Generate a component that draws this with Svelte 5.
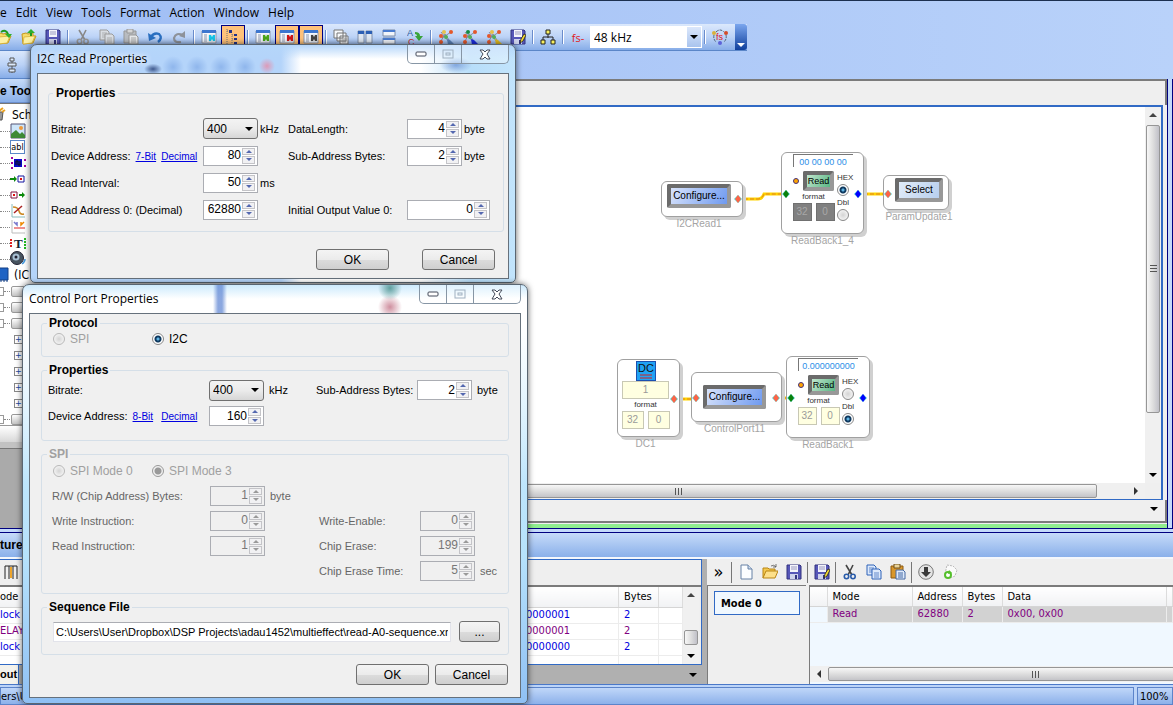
<script lang="ts">
  type Tool = { icon: string; sep?: boolean; on?: boolean; wide?: boolean };

  const menus = ['e', 'Edit', 'View', 'Tools', 'Format', 'Action', 'Window', 'Help'];

  const mainTools: Tool[] = [
    { icon: 'open' },
    { icon: 'save', sep: true },
    { icon: 'cut' },
    { icon: 'copy' },
    { icon: 'paste' },
    { icon: 'undo' },
    { icon: 'redo', sep: true },
    { icon: 'win-cyan' },
    { icon: 'tree', on: true, sep: true },
    { icon: 'win-green' },
    { icon: 'win-red', on: true },
    { icon: 'win-dark', on: true, sep: true },
    { icon: 'cascade' },
    { icon: 'tile-v' },
    { icon: 'tile-h' },
    { icon: 'spell', wide: true, sep: true },
    { icon: 'link-blue' },
    { icon: 'link-navy' },
    { icon: 'link-gold' },
    { icon: 'save-edit', sep: true },
    { icon: 'hierarchy', sep: true }
  ];

  const captureTools: Tool[] = [
    { icon: 'new' },
    { icon: 'folder' },
    { icon: 'save', sep: true },
    { icon: 'save-edit', sep: true },
    { icon: 'cut-blue' },
    { icon: 'copy-blue' },
    { icon: 'paste-gold', sep: true },
    { icon: 'download' },
    { icon: 'recycle' }
  ];

  const treeIcons = ['picture', 'abl', 'chip', 'in', 'out', 'curve', 'axis', 'text', 'speaker'];

  const captures = [
    { mode: 'lock', value: '0000001', bytes: '2', read: false },
    { mode: 'ELAY', value: '0000001', bytes: '2', read: true },
    { mode: 'lock', value: '0000000', bytes: '2', read: false }
  ];

  let hexSelected = $state('HEX');
  let dblSelected = $state('Dbl');
  let protocol = $state('I2C');
</script>

{#snippet icon(name: string)}
  <svg class="icon" width="16" height="16" viewBox="0 0 16 16" aria-hidden="true">
    {#if name === 'open'}
      <path d="M1 5l4-1 2 1 5-1v3l3 0-3 7-10 1z" fill="#f6dc6a" stroke="#c79a1c" />
      <path d="M3 8l11-1-3 7-9 1z" fill="#fdf1a4" stroke="#d3aa2e" stroke-width=".7" />
      <path d="M10 7V3" stroke="#1f9a1f" stroke-width="2" /><path d="M6 4l4-4 4 4z" fill="#2fb02f" />
    {:else if name === 'import'}
      <path d="M1 5l4-1 2 1 5-1v3l3 0-3 7-10 1z" fill="#f6dc6a" stroke="#c79a1c" />
      <path d="M3 8l11-1-3 7-9 1z" fill="#fdf1a4" stroke="#d3aa2e" stroke-width=".7" />
      <path d="M5 3q5-3 7 2" fill="none" stroke="#1f9a1f" stroke-width="2" /><path d="M9 5h7l-3 4z" fill="#2fb02f" />
    {:else if name === 'folder'}
      <path d="M1 14V4h5l1 1h6v3" fill="#f3c84f" stroke="#b98514" />
      <path d="M1 14l3-7h12l-3 7z" fill="#fde08a" stroke="#b98514" />
      <path d="M9 2q3-2 5 1M14 0v3h-3" fill="none" stroke="#555" stroke-width=".8" />
    {:else if name === 'save' || name === 'save-edit'}
      <path d="M1 1h13l1 1v13H1z" fill="#5757b8" stroke="#33337e" />
      <path d="M4 1h8v7H4z" fill="#f4f4fb" />
      <path d="M5 3h6M5 5h6" stroke="#9a9ac0" />
      <path d="M4 10h8v5H4z" fill="#cfd3ec" /><path d="M9 11h2v4H9z" fill="#33337e" />
      {#if name === 'save-edit'}
        <path d="M10 14l1-4 3-5 2 1-3 6z" fill="#f5d935" stroke="#222" stroke-width=".8" />
      {/if}
    {:else if name === 'cut' || name === 'cut-blue'}
      {@const c = name === 'cut' ? '#9a9a9a' : '#2a5caa'}
      <path d="M4 1l6 10M11 1L6 11" stroke={name === 'cut' ? '#888' : '#444'} stroke-width="1.6" />
      <circle cx="4.500" cy="12.500" r="2.200" fill="none" stroke={c} stroke-width="1.600" />
      <circle cx="11" cy="12.500" r="2.200" fill="none" stroke={c} stroke-width="1.600" />
    {:else if name === 'copy' || name === 'copy-blue'}
      {@const c = name === 'copy' ? '#9b9b9b' : '#2f62b8'}
      {@const f = name === 'copy' ? '#d9dde2' : '#dce9fb'}
      <path d="M1 1h7l2 2v8H1z" fill={f} stroke={c} />
      <path d="M3 4h5M3 6h5M3 8h4" stroke={c} stroke-width=".7" />
      <path d="M6 5h7l2 2v8H6z" fill={f} stroke={c} />
      <path d="M8 9h5M8 11h5M8 13h5" stroke={c} stroke-width=".7" />
    {:else if name === 'paste' || name === 'paste-gold'}
      {@const g = name === 'paste'}
      <path d="M1 2h12v12H1z" fill={g ? '#b9bcc0' : '#d9972b'} stroke={g ? '#979797' : '#8d5a12'} />
      <path d="M4 0h6v4H4z" fill={g ? '#d5d5d5' : '#e9d49a'} stroke={g ? '#979797' : '#70501c'} />
      <path d="M6 6h7l2 2v7H6z" fill={g ? '#e6e8ea' : '#dde9fa'} stroke={g ? '#979797' : '#4469a3'} />
      <path d="M8 9h5M8 11h5M8 13h5" stroke={g ? '#a9a9a9' : '#4469a3'} />
    {:else if name === 'undo'}
      <path d="M4 8q3-5 8-3q4 4-1 8" fill="none" stroke="#2a6fc0" stroke-width="2.400" />
      <path d="M1 4l1 8 7-3z" fill="#2a6fc0" />
    {:else if name === 'redo'}
      <path d="M12 6q-7-3-9 3q0 5 7 4" fill="none" stroke="#8e9299" stroke-width="2.200" />
      <path d="M14 2v7l-6-2z" fill="#8e9299" />
    {:else if name.startsWith('win-')}
      {@const c = name === 'win-cyan' ? '#17c3e6' : name === 'win-green' ? '#4aa51a' : name === 'win-red' ? '#d01414' : '#444'}
      <path d="M1 2h14v12H1z" fill="#f6f8fc" stroke="#8e99ad" />
      <path d="M1 1h14v3H1z" fill="#3c76cf" />
      <path d="M3 6h3M3 8h3M3 10h3M3 12h3" stroke="#8c98b0" />
      <path d="M8 6h6v6H8z" fill="#fff" stroke="#b9c1d0" stroke-width=".6" />
      <path d="M8 6h2l1 2 1-2h2v6h-2l-1-2-1 2H8z" fill={c} />
    {:else if name === 'tree'}
      <path d="M2 0v16M2 2h3M7 5v9M7 6h3M7 10h3" stroke="#777" stroke-dasharray="1 1" />
      <path d="M4 1h3v3H4zM9 5h3v2H9zM9 9h3v2H9zM9 13h3v2H9z" fill="#223388" />
    {:else if name === 'cascade'}
      <path d="M1 1h9v8H1zM4 4h9v8H4zM7 7h8v8H7z" fill="#f7f9fb" stroke="#777" />
      <path d="M8 10h6M8 12h6M10 8v6M12 8v6" stroke="#8c8c8c" stroke-width=".6" />
    {:else if name === 'tile-v'}
      <path d="M1 2h6v12H1zM9 2h6v12H9z" fill="#dfe7f2" stroke="#8090aa" />
      <path d="M1 2h6v3H1zM9 2h6v3H9z" fill="#2c5fb4" />
    {:else if name === 'tile-h'}
      <path d="M2 1h12v6H2zM2 9h12v6H2z" fill="#f2f5fa" stroke="#7d8ca8" />
      <path d="M2 1h12v2H2zM2 9h12v2H2z" fill="#4a7cd0" />
    {:else if name === 'spell'}
      <text class="glyph" x="0" y="7" font-size="9" fill="#2f5d9d">A</text>
      <text class="glyph" x="1" y="16" font-size="9" fill="#c02b2b">C</text>
      <path d="M8 3q5 0 5 4h3l-4 5-4-5h2q0-2-2-2z" fill="#3aa53a" />
    {:else if name.startsWith('link-')}
      {@const c = name === 'link-blue' ? '#5b82b8' : name === 'link-navy' ? '#1c2ce0' : '#e4bc1f'}
      <path d="M3 12l4-7 4 6M4 9l9-6M3 3l8 10" stroke="#778" stroke-width=".8" fill="none" />
      <circle cx="6" cy="3" r="2" fill={name === 'link-navy' ? '#138b43' : '#e7c04a'} />
      <circle cx="13" cy="3" r="2" fill="#e4572a" /><circle cx="3" cy="7" r="2" fill="#e4572a" />
      <circle cx="3" cy="13" r="2" fill="#e4572a" /><circle cx="8" cy="8" r="2" fill="#54b05a" />
      <path d="M9 10l3 1 4 4-6 1z" fill={c} />
    {:else if name === 'hierarchy'}
      <path d="M8 5v4M3 11V8h10v3" fill="none" stroke="#222" />
      <path d="M6 1h4v4H6zM1 11h4v4H1zM11 11h4v4h-4z" fill="#f8ef5c" stroke="#222" />
    {:else if name === 'new'}
      <path d="M3 1h7l4 4v10H3z" fill="#fbfdff" stroke="#6681a5" />
      <path d="M10 1v4h4" fill="#cddcf0" stroke="#6681a5" />
    {:else if name === 'download'}
      <circle cx="8" cy="8" r="7.300" fill="#e4e4e4" stroke="#777" />
      <path d="M6 3h4v5h3l-5 5-5-5h3z" fill="#3a3a3a" />
    {:else if name === 'recycle'}
      <path d="M5 1l6 1 4 4-2 6-5 2-5-4z" fill="#fafafa" stroke="#bbb" stroke-dasharray="2 1" />
      <circle cx="6" cy="11" r="3" fill="#fff" stroke="#55bf2c" stroke-width="2" />
      <path d="M7 6l3 3-4 1z" fill="#55bf2c" />
    {:else if name === 'rate'}
      <path d="M4 3q4-4 8 0M14 6q1 4-2 7M2 6q-1 4 2 7" fill="none" stroke="#567" stroke-dasharray="3 1" />
      <circle cx="2" cy="4" r="2" fill="#d9b13b" /><circle cx="14" cy="4" r="2" fill="#d24c2a" />
      <circle cx="8" cy="14" r="2" fill="#5d62d8" />
      <text class="glyph" x="4" y="11" font-size="9" fill="#e01818">fs</text>
    {:else if name === 'align'}
      <path d="M8 1v15" stroke="#555" />
      <path d="M6 1h4v3H6zM4 6h8v3H4zM5 12h6v3H5z" fill="#dce9fb" stroke="#555" />
    {:else if name === 'picture'}
      <path d="M1 1h14v14H1z" fill="#cfe6fa" stroke="#557" />
      <path d="M1 15V11l5-4 4 4 2-2 3 3v3z" fill="#3d8a35" /><circle cx="11" cy="5" r="2" fill="#ef9a3a" />
    {:else if name === 'chip'}
      <path d="M4 4h8v8H4z" fill="#0808c8" /><path d="M6 10V6h2v4h2V6" stroke="#111" fill="none" />
      <path d="M1 2h2v2H1zM1 7h2v2H1zM1 12h2v2H1zM14 4h2v2h-2zM14 10h2v2h-2z" fill="#a000a0" />
    {:else if name === 'in'}
      <path d="M0 8h4" stroke="#0a8a0a" stroke-width="2" /><path d="M4 5l3 3-3 3z" fill="#0a8a0a" />
      <path d="M8 5h6v6H8z" fill="#fff" stroke="#1515a0" /><path d="M10 7h2v2h-2z" fill="#e01010" />
    {:else if name === 'out'}
      <path d="M1 5h6v6H1z" fill="#fff" stroke="#801540" /><path d="M3 7h2v2H3z" fill="#e01010" />
      <path d="M9 8h4" stroke="#0a8a0a" stroke-width="2" /><path d="M12 5l3 3-3 3z" fill="#0a8a0a" />
    {:else if name === 'curve'}
      <path d="M2 1v13h13" fill="none" stroke="#8bb" /><path d="M3 4q5 0 6 4t5 3" fill="none" stroke="#c82" stroke-width="1.500" />
      <path d="M4 10l8-7" stroke="#a22" stroke-width="1.500" />
    {:else if name === 'axis'}
      <path d="M2 1v13h13" fill="none" stroke="#bbb" /><path d="M4 9h11" stroke="#d22" />
      <path d="M4 3l3 3V3" fill="none" stroke="#77c" stroke-width="1.500" />
      <path d="M14 3l-3 3V3" fill="none" stroke="#e80" stroke-width="1.500" />
    {:else if name === 'text'}
      <text class="serif" x="4" y="13" font-size="13" fill="#123">T</text>
      <path d="M1 4v9" stroke="#d22" stroke-width="2" stroke-dasharray="2 1" />
      <path d="M15 3v11" stroke="#2b2" stroke-width="2" stroke-dasharray="2 1" />
    {:else if name === 'speaker'}
      <circle cx="7" cy="7" r="6.500" fill="#47535f" stroke="#223" /><circle cx="6" cy="6" r="3.500" fill="#a8c0d4" />
      <circle cx="6" cy="6" r="1.500" fill="#223" /><path d="M12 13q3-2 3-5" fill="none" stroke="#49d" stroke-width="1.500" />
    {:else if name === 'wrench'}
      <path d="M3 5h6l-1 8H4z" fill="#999" stroke="#555" /><path d="M5 4l4-3M8 5l3-2" stroke="#e8a020" stroke-width="2" />
    {:else if name === 'ic'}
      <path d="M1 1h9v12H1z" fill="#1f63c4" stroke="#123f85" /><path d="M3 13v2M6 13v2M9 13v2" stroke="#123f85" />
    {/if}
  </svg>
{/snippet}

{#snippet toolbar(tools: Tool[])}
  {#each tools as tool}
    <button class="tool" class:on={tool.on} class:wide={tool.wide} type="button" aria-label={tool.icon}>
      {@render icon(tool.icon)}
    </button>
    {#if tool.sep}<span class="sep"></span>{/if}
  {/each}
{/snippet}

{#snippet spin(id: string, value: number, disabled = false, long = false)}
  <span class="spin" class:long class:disabled>
    <input {id} type="number" {value} {disabled} />
    <span class="arrows"><i class="step"></i><i class="step less"></i></span>
  </span>
{/snippet}

{#snippet windowButtons()}
  <div class="window-buttons">
    <button type="button" aria-label="Minimize">
      <svg width="12" height="6"><rect x="1" y="1" width="10" height="4" rx="1" fill="#fff" stroke="#444b5a" /></svg>
    </button>
    <button type="button" aria-label="Maximize" disabled>
      <svg width="12" height="10"><rect x="1" y="1" width="10" height="8" fill="none" stroke="#9fb0c0" /><rect x="4" y="4" width="4" height="2" fill="none" stroke="#9fb0c0" /></svg>
    </button>
    <button class="close" type="button" aria-label="Close">
      <svg width="12" height="11" viewBox="0 0 12 11"><path d="M1 1h3l2 2 2-2h3L8 5l3 5H8L6 8l-2 2H1l3-5z" fill="#fff" stroke="#444b5a" /></svg>
    </button>
  </div>
{/snippet}

{#snippet pin(x: number, y: number, color: string)}
  <path d="M{x - 4} {y}l4-4 4 4-4 4z" fill="#4fd8d0" />
  <path d="M{x - 3} {y}l3-4 3 4-3 4z" fill={color} />
{/snippet}

{#snippet readback(id: string, text: string, selected: string)}
  <output class="display">{text}</output>
  <div class="readback">
    <div class="read-left">
      <div class="read-row"><i class="dot"></i><button class="bevel green" type="button">Read</button></div>
      <span class="tiny">format</span>
      <div class="boxes" class:grey={selected === 'HEX'}><span>32</span><span>0</span></div>
    </div>
    <div class="read-right">
      {#each ['HEX', 'Dbl'] as option}
        <label for="{id}-{option}">{option}</label>
        <input id="{id}-{option}" name={id} type="radio" value={option} checked={selected === option} />
      {/each}
    </div>
  </div>
{/snippet}

<div class="app">
  <nav class="menu">
    {#each menus as item}
      <button type="button">{item}</button>
    {/each}
  </nav>

  <div class="toolbar">
    <button class="tool cut-off" type="button" aria-label="import">{@render icon('import')}</button>
    {@render toolbar(mainTools)}
    <label class="fs" for="rate">fs-</label>
    <span class="rate">
      <select id="rate"><option>48 kHz</option></select>
      <span class="rate-arrow"><i class="tri"></i></span>
    </span>
    <span class="sep"></span>
    <button class="tool" type="button" aria-label="rate">{@render icon('rate')}</button>
    <span class="overflow"><i class="tri"></i></span>
  </div>
  <div class="toolbar-row"><div class="toolbar second"><button class="tool" type="button" aria-label="align">{@render icon('align')}</button></div></div>

  <main class="work">
    <aside class="toolbox">
      <h2 class="caption">e Too</h2>
      <ul class="tree">
        <li class="root">{@render icon('wrench')}Sch</li>
        {#each treeIcons as name}
          <li>
            <span class="dots"></span>
            {#if name === 'abl'}<span class="abl">abl</span>{:else}{@render icon(name)}{/if}
          </li>
        {/each}
        <li class="root ic">{@render icon('ic')}(IC</li>
        {#each Array(3) as _}
          <li><span class="minus"></span><span class="dots short"></span><span class="node-folder"></span></li>
        {/each}
        {#each Array(5) as _}
          <li class="deep"><span class="plus">+</span></li>
        {/each}
        <li><span class="minus"></span><span class="dots short"></span><span class="node-folder"></span></li>
      </ul>
      <div class="hbar"></div>
      <div class="void"></div>
    </aside>

    <section class="document">
      <div class="tabs"></div>
      <div class="view">
        <div class="canvas">
          <svg class="wires" width="920" height="375">
            <path d="M516 92h20q4 0 6-5h23M636 87h30" />
            <path d="M453 292h22M554 291h16" />
            <path class="dash" d="M516 92h20q4 0 6-5h23M636 87h30" />
            <path class="dash" d="M453 292h22M554 291h16" />
          </svg>

          <div class="node i2c-read"><button class="bevel blue" type="button">Configure...</button><span class="name">I2CRead1</span></div>
          <div class="node read-back-4">{@render readback('rb4', '00 00 00 00', hexSelected)}<span class="name">ReadBack1_4</span></div>
          <div class="node param"><button class="bevel pale" type="button">Select</button><span class="name">ParamUpdate1</span></div>
          <div class="node dc">
            <svg width="20" height="20" aria-hidden="true">
              <rect x="0" y="0" width="20" height="20" fill="#1fa2f4" stroke="#1b50b0" stroke-width="2" />
              <text class="glyph" x="2" y="11" font-size="11" fill="#111">DC</text>
              <path d="M4 14h12M4 17h12" stroke="#d22020" />
            </svg>
            <span class="value">1</span>
            <span class="tiny">format</span>
            <div class="boxes"><span>32</span><span>0</span></div>
            <span class="name">DC1</span>
          </div>
          <div class="node control"><button class="bevel blue" type="button">Configure...</button><span class="name">ControlPort11</span></div>
          <div class="node read-back">{@render readback('rb1', '0.000000000', dblSelected)}<span class="name">ReadBack1</span></div>

          <svg class="pins" width="920" height="375">
            {@render pin(516, 92, '#ff6347')}
            {@render pin(564, 87, '#0a800a')}
            {@render pin(636, 87, '#0000ff')}
            {@render pin(666, 87, '#ff6347')}
            {@render pin(452, 292, '#ff6347')}
            {@render pin(474, 291, '#ff6347')}
            {@render pin(554, 291, '#ff6347')}
            {@render pin(569, 291, '#0a800a')}
            {@render pin(641, 291, '#0000ff')}
          </svg>
        </div>
        <div class="vscroll"><i class="up"></i><div class="thumb"><i class="grip"></i></div><i class="down"></i></div>
        <div class="hscroll"><div class="thumb"><i class="grip"></i></div><i class="right"></i></div>
      </div>
      <div class="doc-foot"><i class="tri"></i></div>
      <div class="green-line"></div>
    </section>
    <div class="v-splitter"></div>
  </main>

  <div class="splitter"></div>
  <h2 class="caption capture-title">ture</h2>

  <section class="bottom">
    <div class="captures">
      <div class="capture-frame">
        <div class="capture-tools">
          <svg width="18" height="14" aria-hidden="true"><path d="M1 14V1h4v13M5 1h8v13M9 1v13" fill="none" stroke="#222" /><path d="M6 2h2v11H6z" fill="#eda52c" /></svg>
        </div>
        <div class="capture-body">
          <table>
            <colgroup><col /><col class="c-value" /><col class="c-bytes" /><col class="c-rest" /></colgroup>
            <thead><tr><th>ode</th><th></th><th>Bytes</th><th></th></tr></thead>
            <tbody>
              {#each captures as row}
                <tr class:read={row.read}><td>{row.mode}</td><td>{row.value}</td><td>{row.bytes}</td><td></td></tr>
              {/each}
              <tr><td></td><td></td><td></td><td></td></tr>
            </tbody>
          </table>
          <div class="vscroll small"><i class="up"></i><div class="thumb"></div><i class="down"></i></div>
        </div>
      </div>
      <div class="capture-tabs"><span class="tab">out</span><i class="tri"></i></div>
    </div>

    <div class="sequence">
      <div class="sequence-tools">
        <span class="more">»</span><span class="sep"></span>
        {@render toolbar(captureTools)}
      </div>
      <div class="sequence-body">
        <div class="modes"><button class="mode" type="button">Mode 0</button></div>
        <div class="reads">
          <table>
            <colgroup><col class="r-mark" /><col class="r-mode" /><col class="r-address" /><col class="r-bytes" /><col /><col class="r-end" /></colgroup>
            <thead><tr><th></th><th>Mode</th><th>Address</th><th>Bytes</th><th>Data</th><th></th></tr></thead>
            <tbody><tr><td></td><td>Read</td><td>62880</td><td>2</td><td>0x00, 0x00</td><td></td></tr></tbody>
          </table>
          <div class="hscroll"><i class="left"></i><div class="thumb"><i class="grip"></i></div></div>
        </div>
      </div>
    </div>
  </section>

  <footer class="status"><span class="path">ers\U</span><span class="zoom">100%</span></footer>

  <section class="dialog read-dialog">
    <header><h3>I2C Read Properties</h3>{@render windowButtons()}</header>
    <form class="client">
      <fieldset>
        <legend>Properties</legend>
        <div class="form-grid">
          <label for="rd-bitrate">Bitrate:</label>
          <span class="field"><span class="combo"><select id="rd-bitrate"><option>400</option></select><i class="tri"></i></span>kHz</span>
          <label for="rd-length">DataLength:</label>
          <span class="field">{@render spin('rd-length', 4)}byte</span>

          <span><label for="rd-device">Device Address:</label> <a href="#bits">7-Bit</a> <a href="#base">Decimal</a></span>
          <span class="field">{@render spin('rd-device', 80)}</span>
          <label for="rd-sub">Sub-Address Bytes:</label>
          <span class="field">{@render spin('rd-sub', 2)}byte</span>

          <label for="rd-interval">Read Interval:</label>
          <span class="field">{@render spin('rd-interval', 50)}ms</span>
          <span></span><span></span>

          <label for="rd-address">Read Address 0: (Decimal)</label>
          <span class="field">{@render spin('rd-address', 62880)}</span>
          <label for="rd-initial">Initial Output Value 0:</label>
          <span class="field">{@render spin('rd-initial', 0, false, true)}</span>
        </div>
      </fieldset>
      <div class="actions"><button type="button">OK</button><button type="button">Cancel</button></div>
    </form>
  </section>

  <section class="dialog port-dialog">
    <header><h3>Control Port Properties</h3>{@render windowButtons()}</header>
    <form class="client">
      <fieldset class="protocol">
        <legend>Protocol</legend>
        <div class="radios">
          <label class="off"><input type="radio" name="protocol" value="SPI" bind:group={protocol} disabled />SPI</label>
          <label><input type="radio" name="protocol" value="I2C" bind:group={protocol} />I2C</label>
        </div>
      </fieldset>
      <fieldset class="port">
        <legend>Properties</legend>
        <div class="form-grid">
          <label for="cp-bitrate">Bitrate:</label>
          <span class="field"><span class="combo"><select id="cp-bitrate"><option>400</option></select><i class="tri"></i></span>kHz</span>
          <label for="cp-sub">Sub-Address Bytes:</label>
          <span class="field">{@render spin('cp-sub', 2)}byte</span>

          <span><label for="cp-device">Device Address:</label> <a href="#port-bits">8-Bit</a>&nbsp; <a href="#port-base">Decimal</a></span>
          <span class="field">{@render spin('cp-device', 160)}</span>
        </div>
      </fieldset>
      <fieldset class="spi">
        <legend>SPI</legend>
        <div class="radios">
          <label class="off"><input type="radio" name="spi-mode" disabled />SPI Mode 0</label>
          <label class="off"><input type="radio" name="spi-mode" checked disabled />SPI Mode 3</label>
        </div>
        <div class="form-grid">
          <label for="spi-rw">R/W (Chip Address) Bytes:</label>
          <span class="field">{@render spin('spi-rw', 1, true)}byte</span>
          <span></span><span></span>

          <label for="spi-write">Write Instruction:</label>
          <span class="field">{@render spin('spi-write', 0, true)}</span>
          <label for="spi-enable">Write-Enable:</label>
          <span class="field">{@render spin('spi-enable', 0, true)}</span>

          <label for="spi-read">Read Instruction:</label>
          <span class="field">{@render spin('spi-read', 1, true)}</span>
          <label for="spi-erase">Chip Erase:</label>
          <span class="field">{@render spin('spi-erase', 199, true)}</span>

          <span></span><span></span>
          <label for="spi-time">Chip Erase Time:</label>
          <span class="field">{@render spin('spi-time', 5, true)}sec</span>
        </div>
      </fieldset>
      <fieldset class="file">
        <legend>Sequence File</legend>
        <div class="file-row">
          <input type="text" aria-label="Sequence File" value="C:\Users\User\Dropbox\DSP Projects\adau1452\multieffect\read-A0-sequence.xml" />
          <button type="button">...</button>
        </div>
      </fieldset>
      <div class="actions"><button type="button">OK</button><button type="button">Cancel</button></div>
    </form>
  </section>
</div>

<style>
  :global(body) {
    margin: 0;
  }

  .app,
  .app :global(*) {
    box-sizing: border-box;
  }

  .app {
    position: relative;
    display: flex;
    flex-direction: column;
    min-height: 100vh;
    overflow: hidden;
    background: linear-gradient(90deg, #9fbdf4, #b9d2fa);
    border-top: 1px solid #1c3050;
    font-family: 'DejaVu Sans Condensed', 'Noto Sans', sans-serif;
    font-size: 11px;
    color: #000;
  }

  button,
  input,
  select {
    font: inherit;
    color: inherit;
    padding: 0;
    margin: 0;
  }

  h2,
  h3,
  ul {
    margin: 0;
    padding: 0;
    list-style: none;
  }

  table {
    width: 100%;
    border-collapse: collapse;
    table-layout: fixed;
  }

  th,
  td {
    text-align: left;
    font-weight: normal;
    white-space: nowrap;
    overflow: hidden;
    padding: 0 5px;
  }

  .icon {
    display: block;
    flex: none;
  }

  .glyph {
    font-family: 'Liberation Sans', sans-serif;
  }

  .serif {
    font-family: 'Liberation Serif', serif;
    font-weight: bold;
  }

  .tri,
  .up,
  .down,
  .left,
  .right {
    flex: none;
    width: 0;
    height: 0;
    border: 4px solid transparent;
  }

  .tri,
  .down {
    border-top-color: #000;
    border-bottom: 0;
  }

  .up {
    border-bottom-color: #444;
    border-top: 0;
  }

  .left {
    border-right-color: #333;
    border-left: 0;
  }

  .right {
    border-left-color: #333;
    border-right: 0;
  }

  /* menu and toolbars */
  .menu {
    display: flex;
    height: 23px;
    gap: 9px;
  }

  .menu button {
    border: 0;
    background: none;
    font-family: 'Open Sans', 'Noto Sans', sans-serif;
    font-size: 12px;
    line-height: 24px;
  }

  .toolbar {
    display: flex;
    align-items: center;
    align-self: flex-start;
    height: 27px;
    background: linear-gradient(#dbe8fc, #bcd3f7 50%, #87ade8);
    border-bottom: 1px solid #5b86c8;
  }

  .toolbar-row {
    height: 28px;
  }

  .second {
    width: 460px;
    height: 28px;
  }

  .tool {
    display: flex;
    align-items: center;
    justify-content: center;
    width: 24px;
    height: 24px;
    border: 0;
    background: none;
  }

  .tool.on {
    background: #ffc27a;
    border: 1px solid #000080;
  }

  .tool.wide {
    width: 27px;
  }

  .tool.cut-off {
    width: 17px;
    justify-content: flex-end;
    padding-right: 5px;
    overflow: hidden;
  }

  .sep {
    flex: none;
    width: 2px;
    height: 14px;
    margin: 0 2px;
    background: linear-gradient(90deg, #6a8ccb 50%, #fff 50%);
  }

  .fs {
    width: 24px;
    text-align: center;
    color: #e02020;
    font-family: 'Open Sans', 'Noto Sans', sans-serif;
  }

  .rate {
    display: flex;
    width: 112px;
    height: 22px;
    padding: 1px;
    background: #fff;
  }

  .rate select {
    flex: 1;
    appearance: none;
    border: 0;
    padding-left: 3px;
    background: none;
    font-family: 'Open Sans', 'Noto Sans', sans-serif;
    font-size: 12px;
  }

  .rate-arrow {
    display: flex;
    align-items: center;
    justify-content: center;
    width: 14px;
    background: linear-gradient(#dbe7fb, #a9c4ee);
  }

  .overflow {
    display: flex;
    align-items: flex-end;
    justify-content: center;
    align-self: stretch;
    width: 12px;
    margin-left: 3px;
    padding-bottom: 3px;
    background: linear-gradient(#7ba6ee, #0f3f9c);
    border-radius: 0 3px 3px 0;
  }

  .overflow .tri {
    border-top-color: #fff;
  }

  /* main area */
  .work {
    flex: 1;
    display: flex;
    min-height: 449px;
  }

  .toolbox {
    display: flex;
    flex-direction: column;
    width: 220px;
    background: #fff;
  }

  .caption {
    height: 24px;
    background: linear-gradient(#c6dbf9, #8ab0ea);
    font-family: 'Liberation Sans', sans-serif;
    font-size: 12px;
    line-height: 24px;
    border-bottom: 1px solid #6b8fce;
  }

  .tree {
    height: 322px;
    padding-top: 3px;
    border-top: 1px solid #777;
    overflow: hidden;
  }

  .tree li {
    display: flex;
    align-items: center;
    height: 16px;
  }

  .tree .root {
    gap: 2px;
    margin-left: -8px;
    padding-left: 2px;
    font-size: 12px;
  }

  .tree .ic {
    padding-left: 6px;
    gap: 0;
  }

  .dots {
    width: 10px;
    border-top: 1px dotted #888;
  }

  .dots.short {
    width: 6px;
  }

  .minus {
    width: 4px;
    height: 9px;
    border: 1px solid #999;
    border-left: 0;
  }

  .abl {
    width: 15px;
    height: 14px;
    border: 1px solid #5a88c8;
    font-size: 9px;
    line-height: 12px;
    text-align: center;
  }

  .node-folder {
    width: 16px;
    height: 11px;
    margin-left: 1px;
    border: 1px solid #999;
    border-radius: 2px;
    background: linear-gradient(#fff, #c4c4c4);
  }

  .tree .deep {
    padding-left: 14px;
  }

  .plus {
    width: 9px;
    height: 9px;
    border: 1px solid #888;
    color: #224a9c;
    font-size: 9px;
    line-height: 7px;
    text-align: center;
  }

  .hbar {
    height: 23px;
    border-bottom: 6px solid #c2c2c2;
    background: linear-gradient(#fff, #d8d8d8);
    border-top: 1px solid #999;
  }

  .void {
    flex: 1;
    background: #aaa;
    border-top: 1px solid #777;
  }

  .document {
    flex: 1;
    display: flex;
    flex-direction: column;
    min-width: 0;
    padding-left: 2px;
    background: #efefef;
  }

  .tabs {
    height: 26px;
    border-top: 2px solid #7b7b7b;
    border-right: 2px solid #7b7b7b;
  }

  .view {
    flex: 1;
    display: grid;
    grid-template: 1fr 16px / 1fr 16px;
    border: 1px solid #316ac5;
    border-left: 0;
    border-right-width: 2px;
    border-top-width: 2px;
    margin-right: 4px;
  }

  .canvas {
    position: relative;
    background: #fff;
    overflow: hidden;
    font-family: 'Liberation Sans', sans-serif;
  }

  .vscroll {
    display: flex;
    flex-direction: column;
    align-items: center;
    justify-content: space-between;
    padding: 6px 1px;
    background: #f0f0f0;
  }

  .vscroll .thumb {
    display: flex;
    align-items: center;
    justify-content: center;
    width: 14px;
    height: 79%;
    margin-bottom: auto;
    margin-top: 8px;
    border: 1px solid #969696;
    border-radius: 2px;
    background: linear-gradient(90deg, #f7f7f7, #dedede 50%, #c0c0c8);
  }

  .vscroll .grip {
    width: 7px;
    height: 8px;
    background: repeating-linear-gradient(#555 0 1px, transparent 1px 3px);
  }

  .hscroll {
    display: flex;
    align-items: center;
    padding: 1px 0;
    background: #f0f0f0;
  }

  .hscroll .thumb {
    display: flex;
    flex: 1;
    align-items: center;
    justify-content: center;
    height: 14px;
    border: 1px solid #969696;
    border-radius: 2px;
    background: linear-gradient(#f7f7f7, #dedede 50%, #c4c4c8);
  }

  .hscroll .grip {
    width: 8px;
    height: 7px;
    background: repeating-linear-gradient(90deg, #555 0 1px, transparent 1px 3px);
  }

  .view .hscroll {
    gap: 37px;
    padding-left: 39px;
    padding-right: 7px;
  }

  .doc-foot {
    display: flex;
    justify-content: flex-end;
    height: 23px;
    padding: 7px 7px 0 0;
    border-right: 2px solid #7b7b7b;
    border-bottom: 2px solid #7b7b7b;
  }

  .green-line {
    height: 5px;
    border-top: 1px solid #efefef;
    background: #90ee90;
  }

  .v-splitter {
    width: 6px;
    border: 1px solid #000080;
    border-width: 0 1px;
    background: #c4dafa;
  }

  .splitter {
    height: 5px;
    border: 1px solid #000080;
    border-width: 1px 0;
    background: #c4dafa;
  }

  /* schematic nodes */
  .wires,
  .pins {
    position: absolute;
    left: 0;
    top: 0;
    pointer-events: none;
  }

  .wires path {
    fill: none;
    stroke: #ffd400;
    stroke-width: 3;
  }

  .wires .dash {
    stroke: #e08020;
    stroke-width: 1;
    stroke-dasharray: 4 2;
  }

  .node {
    position: absolute;
    display: flex;
    flex-direction: column;
    align-items: center;
    border: 1px solid #a0a0a0;
    border-radius: 6px;
    background: #fff;
    box-shadow: 3px 3px 0 #d0d0d0;
    font-size: 10px;
  }

  .name {
    position: absolute;
    top: 100%;
    margin-top: 2px;
    color: #a4a4a4;
    white-space: nowrap;
  }

  .i2c-read {
    left: 439px;
    top: 74px;
    width: 82px;
    height: 36px;
    padding: 2px 6px 0 0;
  }

  .read-back-4 {
    left: 559px;
    top: 45px;
    width: 83px;
    height: 82px;
  }

  .param {
    left: 661px;
    top: 68px;
    width: 66px;
    height: 35px;
    padding: 2px 0 0 6px;
  }

  .dc {
    left: 395px;
    top: 252px;
    width: 63px;
    height: 78px;
    padding: 1px 6px 0 0;
  }

  .control {
    left: 469px;
    top: 265px;
    width: 91px;
    height: 50px;
    justify-content: center;
    padding-right: 4px;
  }

  .read-back {
    left: 564px;
    top: 249px;
    width: 84px;
    height: 82px;
  }

  .bevel {
    height: 24px;
    padding: 0 2px;
    border: 4px solid;
    border-color: #6b6b6b #989898 #989898 #6b6b6b;
    border-radius: 2px;
    font-size: 10px;
    line-height: 16px;
    white-space: nowrap;
  }

  .blue {
    background: linear-gradient(120deg, #d8e3fb, #6f9af0);
  }

  .pale {
    padding: 0 6px;
    background: linear-gradient(120deg, #e2ecf8, #b8cfee);
  }

  .green {
    height: 20px;
    padding: 0 1px;
    background: linear-gradient(120deg, #c0e6cd, #5ab685);
    font-size: 9px;
    line-height: 12px;
  }

  .display {
    width: 60px;
    height: 13px;
    margin-top: 1px;
    border: 1px solid #777;
    border-width: 1px 0 0 1px;
    color: #2d8fe8;
    font-size: 9px;
    line-height: 14px;
    text-align: center;
    white-space: nowrap;
  }

  .readback {
    display: flex;
    gap: 3px;
    align-self: stretch;
    padding: 4px 0 0 11px;
  }

  .read-left {
    display: flex;
    flex-direction: column;
    align-items: center;
    width: 41px;
  }

  .read-row {
    display: flex;
    align-items: center;
    gap: 4px;
  }

  .dot {
    width: 6px;
    height: 6px;
    border: 1px solid #46307a;
    border-radius: 50%;
    background: #ffa500;
  }

  .tiny {
    font-size: 8px;
    line-height: 12px;
    color: #333;
  }

  .boxes {
    display: flex;
    gap: 4px;
  }

  .boxes span,
  .value {
    width: 19px;
    height: 18px;
    border: 1px solid #c8c8b4;
    background: #ffffe1;
    color: #9a9a9a;
    line-height: 16px;
    text-align: center;
  }

  .boxes.grey span {
    border-color: #707070;
    background: #808080;
    color: #a8a8a8;
  }

  .dc .value {
    flex: none;
    width: 47px;
  }

  .dc .boxes span {
    width: 22px;
  }

  .read-right {
    display: flex;
    flex-direction: column;
    font-size: 8px;
    line-height: 13px;
    color: #333;
  }

  input[type='radio'] {
    appearance: none;
    flex: none;
    width: 12px;
    height: 12px;
    border: 1px solid #888;
    border-radius: 50%;
    background: radial-gradient(circle, #d4d4d4, #fff);
  }

  input[type='radio']:checked {
    background: radial-gradient(circle, #5fb4e4 0 1px, #103a60 2px 3px, #fff 4px);
  }

  input[type='radio']:disabled {
    border-color: #b8b8b8;
  }

  input[type='radio']:checked:disabled {
    border-color: #999;
    background: radial-gradient(circle, #999 0 3px, #f0f0f0 4px);
  }

  /* capture window */
  .capture-title {
    height: 26px;
    padding-bottom: 0;
    border-bottom: 2px solid #f4f7fc;
  }

  .bottom {
    display: flex;
    height: 125px;
    background: #b0b0b0;
  }

  .captures {
    display: flex;
    flex-direction: column;
    width: 60%;
    max-width: 702px;
  }

  .capture-frame {
    flex: 1;
    display: flex;
    flex-direction: column;
    min-height: 0;
    border: 1px solid #316ac5;
    border-left: 0;
    background: #efefef;
  }

  .capture-tools {
    flex: none;
    height: 27px;
    padding: 5px 4px;
    border-bottom: 2px solid #7b7b7b;
  }

  .capture-body {
    flex: 1;
    display: flex;
    min-height: 0;
    margin-right: 2px;
    background: #fff;
    align-items: flex-start;
    overflow: hidden;
  }

  .capture-body table {
    flex: 1;
    width: 0;
    color: #0000e0;
  }

  .capture-body th {
    height: 20px;
  }

  .capture-body .vscroll {
    align-self: stretch;
    width: 16px;
  }

  .capture-body .thumb {
    flex: none;
    height: 15px;
    margin-top: auto;
    margin-bottom: 9px;
  }

  .c-value {
    width: 98px;
  }

  .c-bytes {
    width: 40px;
  }

  .c-rest {
    width: 24px;
  }

  th {
    height: 19px;
    border-right: 1px solid #dcdcdc;
    border-bottom: 1px solid #d5d5d5;
    background: linear-gradient(#fff, #f1f2f4);
    color: #000;
  }

  td {
    height: 16px;
    line-height: 14px;
    border-right: 1px solid #ececec;
    border-bottom: 1px solid #ececec;
  }

  .capture-body tr > :first-child {
    padding-left: 0;
  }

  .capture-body .read {
    color: #800080;
  }

  .capture-tabs {
    flex: none;
    display: flex;
    align-items: center;
    justify-content: space-between;
    height: 19px;
    padding-right: 5px;
  }

  .tab {
    width: 19px;
    align-self: stretch;
    background: #f3f2ec;
    border-right: 1px solid #316ac5;
    font-family: 'Liberation Sans', sans-serif;
    font-weight: bold;
    line-height: 18px;
  }

  .sequence {
    flex: 1;
    display: flex;
    flex-direction: column;
    min-width: 0;
    margin-left: 5px;
    background: #efefef;
  }

  .sequence-tools {
    display: flex;
    align-items: center;
    height: 26px;
  }

  .sequence-tools .sep {
    width: 1px;
    height: 21px;
    margin: 0 2px 0 1px;
    background: #777;
  }

  .more {
    width: 23px;
    text-align: center;
    font-size: 18px;
    line-height: 20px;
  }

  .sequence-body {
    flex: 1;
    display: flex;
  }

  .modes {
    width: 99px;
    margin-right: 3px;
    padding: 5px 6px;
    border: 1px solid #7b7b7b;
    border-width: 1px 0 0 1px;
  }

  .mode {
    width: 100%;
    height: 24px;
    padding-left: 6px;
    border: 1px solid #316ac5;
    background: #f0f8ff;
    font-weight: bold;
    text-align: left;
  }

  .reads {
    flex: 1;
    display: flex;
    flex-direction: column;
    min-width: 0;
    border: 1px solid #7b7b7b;
    border-width: 2px 0 0 1px;
    background: #f0f8ff;
    color: #800080;
  }

  .reads td:not(:first-child) {
    background: #d2d2d2;
  }

  .reads .hscroll {
    margin-top: auto;
    margin-bottom: 2px;
    padding-left: 7px;
    gap: 7px;
    overflow: hidden;
  }

  .reads .thumb {
    flex: none;
    width: 117%;
  }

  .r-mark {
    width: 17px;
  }

  .r-mode {
    width: 85px;
  }

  .r-address {
    width: 50px;
  }

  .r-bytes {
    width: 40px;
  }

  .r-end {
    width: 6px;
  }

  .status {
    display: flex;
    gap: 3px;
    height: 21px;
    padding-top: 2px;
    background: #bcd4f8;
    border-top: 1px solid #4a78c8;
    line-height: 18px;
  }

  .status span {
    border: 1px solid #5c84ca;
    background: linear-gradient(#c0d7f9, #8db1ea);
  }

  .path {
    flex: 1;
  }

  .zoom {
    width: 36px;
    padding-left: 2px;
  }

  /* dialogs */
  .dialog {
    position: absolute;
    padding: 0 6px;
    border: 1px solid #5a6672;
    border-radius: 7px 7px 5px 5px;
    box-shadow: 0 0 6px rgba(0, 0, 0, 0.6);
    font-family: 'Liberation Sans', sans-serif;
    font-size: 11px;
  }

  .read-dialog {
    left: 30px;
    top: 43px;
    width: 486px;
    padding-bottom: 3px;
    background:
      radial-gradient(ellipse at 425px 20px, rgba(110, 150, 215, 0.8), transparent 16px),
      radial-gradient(ellipse at 122px 24px, rgba(50, 75, 130, 0.9), transparent 9px),
      radial-gradient(circle at 142px 22px, #8fb6ec, transparent 11px),
      radial-gradient(circle at 166px 22px, #8fb6ec, transparent 11px),
      radial-gradient(circle at 190px 22px, #8fb6ec, transparent 11px),
      radial-gradient(circle at 214px 22px, #8fb6ec, transparent 11px),
      radial-gradient(circle at 236px 21px, #dd9ab8, transparent 8px),
      linear-gradient(#b5d6fa, rgba(255, 255, 255, 0) 14px),
      linear-gradient(90deg, #b4d4fa 0 250px, #fff 270px 390px, #b8defa 440px, #c2e4fc);
  }

  .port-dialog {
    left: 22px;
    top: 283px;
    width: 506px;
    padding-bottom: 5px;
    background:
      radial-gradient(circle at 367px 3px, #5f9f9f, transparent 12px),
      radial-gradient(circle at 367px 22px, #cf8f9f, transparent 12px),
      linear-gradient(90deg, transparent 190px, rgba(90, 130, 210, 0.7) 195px 199px, transparent 204px) 0 0 / 100% 28px no-repeat,
      linear-gradient(#cdeafd, #fff 14px, #fff 40px, transparent 200px),
      linear-gradient(#d3efff, #b6e2fb 65%, #8fc0f4);
  }

  .dialog header {
    display: flex;
    align-items: flex-start;
    justify-content: space-between;
    height: 28px;
  }

  .dialog h3 {
    font-family: 'Open Sans', 'Noto Sans', sans-serif;
    font-size: 12px;
    font-weight: normal;
    line-height: 28px;
    text-shadow: 0 0 6px #fff, 0 0 6px #fff;
  }

  .window-buttons {
    display: flex;
    height: 19px;
    border: 1px solid #8796a5;
    border-top: 0;
    border-radius: 0 0 5px 5px;
    background: rgba(255, 255, 255, 0.35);
  }

  .window-buttons button {
    display: flex;
    align-items: center;
    justify-content: center;
    width: 27px;
    border: 0;
    border-right: 1px solid #8796a5;
    background: none;
  }

  .window-buttons .close {
    width: 46px;
    border-right: 0;
  }

  .client {
    border: 1px solid #66717c;
    background: #f0f0f0;
    padding: 12px 4px 8px 10px;
  }

  fieldset {
    min-width: 0;
    margin: 0;
    padding: 0 0 0 2px;
    border: 1px solid #d5dfe8;
    border-radius: 3px;
  }

  legend {
    margin-left: 2px;
    padding: 0 3px;
    font-weight: bold;
    font-size: 12px;
    line-height: 14px;
  }

  .form-grid {
    display: grid;
    grid-template-columns: 152px 85px 119px 1fr;
    grid-auto-rows: 27px;
    align-items: center;
    white-space: nowrap;
  }

  .form-grid a {
    margin-left: 2px;
    font-size: 10px;
    color: #0000e0;
  }

  .field {
    display: flex;
    align-items: center;
    gap: 2px;
  }

  .spin {
    display: flex;
    width: 55px;
    height: 20px;
    border: 1px solid #abadb3;
    background: #fff;
  }

  .spin.long {
    width: 83px;
  }

  .spin input {
    flex: 1;
    min-width: 0;
    appearance: textfield;
    border: 0;
    background: none;
    font-size: 12px;
    text-align: right;
    line-height: 16px;
    padding-bottom: 1px;
  }

  .spin input::-webkit-inner-spin-button {
    display: none;
  }

  .arrows {
    display: grid;
    gap: 1px;
    width: 14px;
    margin: 1px;
  }

  .step {
    display: flex;
    align-items: center;
    justify-content: center;
    width: 13px;
    border: 1px solid #c4c4c8;
    background: #f1f1f3;
  }

  .step::after {
    content: '';
    border: 3px solid transparent;
    border-top: 0;
    border-bottom-color: #5468b0;
  }

  .step.less::after {
    border-top: 3px solid #5468b0;
    border-bottom: 0;
  }

  .disabled {
    background: #f0f0f0;
    color: #777;
  }

  .disabled .step::after {
    border-bottom-color: #999;
  }

  .disabled .less::after {
    border-top-color: #999;
  }

  .combo {
    display: flex;
    align-items: center;
    width: 55px;
    height: 21px;
    padding-right: 4px;
    border: 1px solid #707070;
    border-radius: 3px;
    background: linear-gradient(#f3f3f3, #ebebeb 50%, #d6d6d6);
  }

  .combo select {
    flex: 1;
    min-width: 0;
    appearance: none;
    border: 0;
    padding-left: 3px;
    background: none;
    font-size: 12px;
  }

  .actions {
    display: flex;
    justify-content: flex-end;
    gap: 6px;
  }

  .actions button,
  .file-row button {
    width: 73px;
    height: 21px;
    border: 1px solid #707070;
    border-radius: 3px;
    background: linear-gradient(#f4f4f4, #ebebeb 50%, #dcdcdc 51%, #cfcfcf);
    font-size: 12px;
  }

  .read-dialog .form-grid {
    padding: 15px 0 8px;
  }

  .read-dialog .actions {
    gap: 33px;
    padding: 17px 9px 0 0;
  }

  .port-dialog .client {
    padding: 2px 11px 12px;
  }

  .port-dialog fieldset {
    padding-left: 6px;
    margin-bottom: 6px;
  }

  .port-dialog legend {
    margin-left: -1px;
    padding: 0 2px;
  }

  .port-dialog .actions {
    padding: 3px 1px 0 0;
  }

  .radios {
    display: grid;
    grid-template-columns: 99px 1fr;
    padding-left: 5px;
    height: 20px;
    align-items: center;
    font-size: 12px;
  }

  .radios label {
    display: flex;
    align-items: center;
    gap: 5px;
  }

  .off {
    color: #a0a0a0;
  }

  .protocol .radios {
    height: 26px;
    padding-bottom: 8px;
  }

  .port .form-grid {
    grid-template-columns: 161px 107px 101px 1fr;
    grid-auto-rows: 26px;
    padding-bottom: 11px;
  }

  .port .field {
    gap: 5px;
  }

  .spi .form-grid {
    grid-template-columns: 158px 109px 101px 1fr;
    grid-auto-rows: 25px;
    padding: 2px 0 10px 4px;
    color: #666;
  }

  .spi legend {
    color: #a0a0a0;
  }

  .spi .field {
    gap: 5px;
  }

  .file-row {
    display: flex;
    align-items: center;
    gap: 8px;
    padding: 7px 8px 12px 5px;
  }

  .file-row input {
    flex: 1;
    min-width: 0;
    height: 20px;
    border: 1px solid #e2e3ea;
    border-top-color: #abadb3;
    background: #fff;
    padding: 0 2px;
  }

  .file-row button {
    width: 41px;
  }
</style>
